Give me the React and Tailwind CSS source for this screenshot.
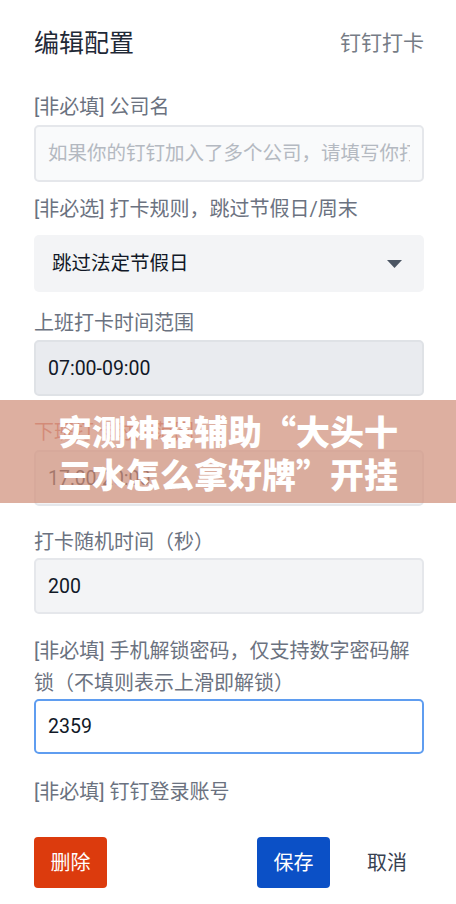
import React from 'react';

const Label = ({ children, className = '' }) => (
  <div className={`text-[20px] leading-[32px] text-[#6b7280] ${className}`}>{children}</div>
);

const Field = ({ value, placeholder, className = '' }) => (
  <input
    readOnly
    value={value}
    placeholder={placeholder}
    className={`w-full rounded-[5px] px-[12px] text-[19.5px] text-[#111827] placeholder:text-[#b4b9c1] outline-none ${className}`}
  />
);

const App = () => {
  return (
    <div className="relative min-h-[904px] w-[456px] bg-white font-[Roboto,'Noto_Sans_CJK_SC',sans-serif]">
      <div className="flex flex-col pl-[34px] pr-[32px] pt-[28px]">
        <div className="flex items-center justify-between h-[32px]">
          <h1 className="text-[25px] text-[#1f2937]">编辑配置</h1>
          <span className="text-[21px] text-[#767c86]">钉钉打卡</span>
        </div>

        <Label className="mt-[31px]">[非必填] 公司名</Label>
        <Field
          className="mt-[2px] h-[57px] bg-[#f9fafb] border-2 border-[#e5e7eb]"
          value=""
          placeholder="如果你的钉钉加入了多个公司，请填写你打卡的公司名"
        />

        <Label className="mt-[11px]">[非必选] 打卡规则，跳过节假日/周末</Label>
        <div className="mt-[10px] h-[57px] rounded-[5px] bg-[#f3f4f6] flex items-center justify-between pl-[18px] pr-[22px]">
          <span className="text-[19.5px] text-[#111827]">跳过法定节假日</span>
          <svg width="15" height="8" viewBox="0 0 15 8">
            <path d="M0 0 H15 L7.5 8 Z" fill="#4b5563" />
          </svg>
        </div>

        <Label className="mt-[15px]">上班打卡时间范围</Label>
        <Field className="mt-[1px] h-[56px] bg-[#e9ebef] border-2 border-[#dfe2e6]" value="07:00-09:00" />

        <Label className="mt-[20px] text-[#d36b5a]">下班打卡时间范围</Label>
        <Field className="mt-[2px] h-[56px] bg-[#f3f4f6] border-2 border-[#e5e7eb]" value="17:00-20:00" />

        <Label className="mt-[20px]">打卡随机时间（秒）</Label>
        <Field className="h-[56px] bg-[#f3f4f6] border-2 border-[#e5e7eb]" value="200" />

        <Label className="mt-[21px]">[非必填] 手机解锁密码，仅支持数字密码解锁（不填则表示上滑即解锁）</Label>
        <Field className="h-[55px] bg-white border-2 border-[#5f9df0]" value="2359" />

        <Label className="mt-[22px]">[非必填] 钉钉登录账号</Label>

        <div className="mt-[29px] flex items-center">
          <button className="h-[51px] w-[73px] rounded-[4px] bg-[#dc3b0d] text-[20px] text-white">删除</button>
          <div className="flex-1" />
          <button className="h-[51px] w-[73px] rounded-[4px] bg-[#0b50c6] text-[20px] text-white">保存</button>
          <button className="ml-[37px] mr-[17px] text-[20px] text-[#374151]">取消</button>
        </div>
      </div>

      <div className="absolute left-0 right-0 top-[400px] h-[103px] bg-[rgba(210,150,130,0.76)] flex flex-col items-center justify-center">
        <div className="font-['Noto_Sans_CJK_SC',sans-serif] text-[34px] leading-[43px] font-black text-white text-center">
          实测神器辅助“大头十
          <br />
          三水怎么拿好牌”开挂
        </div>
      </div>
    </div>
  );
};

export default App;
